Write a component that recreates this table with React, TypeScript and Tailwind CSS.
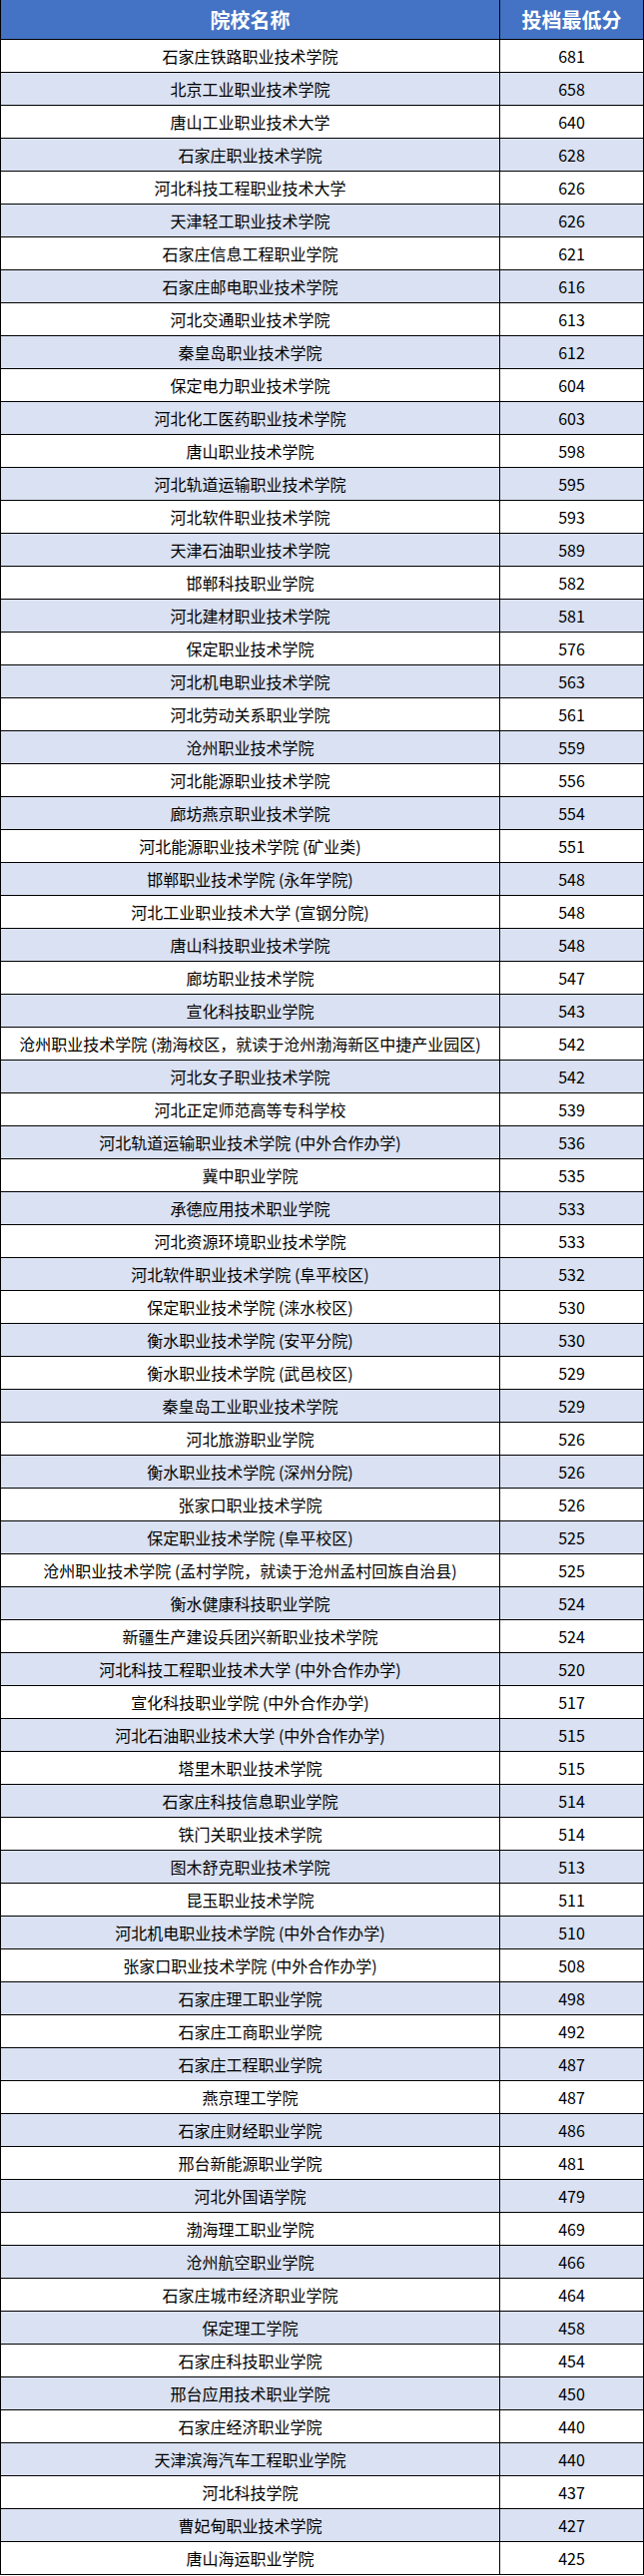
const ROWS: [string, number][] = [
  ["石家庄铁路职业技术学院", 681],
  ["北京工业职业技术学院", 658],
  ["唐山工业职业技术大学", 640],
  ["石家庄职业技术学院", 628],
  ["河北科技工程职业技术大学", 626],
  ["天津轻工职业技术学院", 626],
  ["石家庄信息工程职业学院", 621],
  ["石家庄邮电职业技术学院", 616],
  ["河北交通职业技术学院", 613],
  ["秦皇岛职业技术学院", 612],
  ["保定电力职业技术学院", 604],
  ["河北化工医药职业技术学院", 603],
  ["唐山职业技术学院", 598],
  ["河北轨道运输职业技术学院", 595],
  ["河北软件职业技术学院", 593],
  ["天津石油职业技术学院", 589],
  ["邯郸科技职业学院", 582],
  ["河北建材职业技术学院", 581],
  ["保定职业技术学院", 576],
  ["河北机电职业技术学院", 563],
  ["河北劳动关系职业学院", 561],
  ["沧州职业技术学院", 559],
  ["河北能源职业技术学院", 556],
  ["廊坊燕京职业技术学院", 554],
  ["河北能源职业技术学院 (矿业类)", 551],
  ["邯郸职业技术学院 (永年学院)", 548],
  ["河北工业职业技术大学 (宣钢分院)", 548],
  ["唐山科技职业技术学院", 548],
  ["廊坊职业技术学院", 547],
  ["宣化科技职业学院", 543],
  ["沧州职业技术学院 (渤海校区，就读于沧州渤海新区中捷产业园区)", 542],
  ["河北女子职业技术学院", 542],
  ["河北正定师范高等专科学校", 539],
  ["河北轨道运输职业技术学院 (中外合作办学)", 536],
  ["冀中职业学院", 535],
  ["承德应用技术职业学院", 533],
  ["河北资源环境职业技术学院", 533],
  ["河北软件职业技术学院 (阜平校区)", 532],
  ["保定职业技术学院 (涞水校区)", 530],
  ["衡水职业技术学院 (安平分院)", 530],
  ["衡水职业技术学院 (武邑校区)", 529],
  ["秦皇岛工业职业技术学院", 529],
  ["河北旅游职业学院", 526],
  ["衡水职业技术学院 (深州分院)", 526],
  ["张家口职业技术学院", 526],
  ["保定职业技术学院 (阜平校区)", 525],
  ["沧州职业技术学院 (孟村学院，就读于沧州孟村回族自治县)", 525],
  ["衡水健康科技职业学院", 524],
  ["新疆生产建设兵团兴新职业技术学院", 524],
  ["河北科技工程职业技术大学 (中外合作办学)", 520],
  ["宣化科技职业学院 (中外合作办学)", 517],
  ["河北石油职业技术大学 (中外合作办学)", 515],
  ["塔里木职业技术学院", 515],
  ["石家庄科技信息职业学院", 514],
  ["铁门关职业技术学院", 514],
  ["图木舒克职业技术学院", 513],
  ["昆玉职业技术学院", 511],
  ["河北机电职业技术学院 (中外合作办学)", 510],
  ["张家口职业技术学院 (中外合作办学)", 508],
  ["石家庄理工职业学院", 498],
  ["石家庄工商职业学院", 492],
  ["石家庄工程职业学院", 487],
  ["燕京理工学院", 487],
  ["石家庄财经职业学院", 486],
  ["邢台新能源职业学院", 481],
  ["河北外国语学院", 479],
  ["渤海理工职业学院", 469],
  ["沧州航空职业学院", 466],
  ["石家庄城市经济职业学院", 464],
  ["保定理工学院", 458],
  ["石家庄科技职业学院", 454],
  ["邢台应用技术职业学院", 450],
  ["石家庄经济职业学院", 440],
  ["天津滨海汽车工程职业学院", 440],
  ["河北科技学院", 437],
  ["曹妃甸职业技术学院", 427],
  ["唐山海运职业学院", 425],
];

export default function App() {
  return (
    <div className="w-[645px] bg-white font-['Noto_Sans_CJK_SC',sans-serif] text-black">
      <div className="border-l border-r border-black">
        {/* header */}
        <div className="flex h-[40px] border-b border-black bg-[#4472c4] text-[20px] font-bold text-white">
          <div className="flex w-[500px] items-center justify-center border-r border-black">院校名称</div>
          <div className="flex flex-1 items-center justify-center">投档最低分</div>
        </div>

        {ROWS.map(([name, score], i) => (
          <div
            key={i}
            className={`flex h-[33px] border-b border-black text-[16px] leading-none ${
              i % 2 === 1 ? "bg-[#d9e1f2]" : "bg-white"
            }`}
          >
            <div className="flex w-[500px] items-center justify-center whitespace-nowrap border-r border-black">
              {name}
            </div>
            <div className="flex flex-1 items-center justify-center">{score}</div>
          </div>
        ))}
      </div>
    </div>
  );
}
